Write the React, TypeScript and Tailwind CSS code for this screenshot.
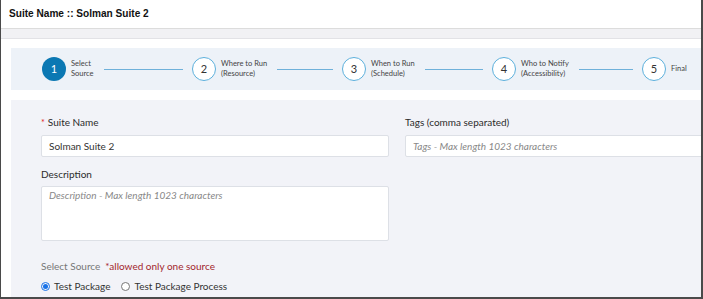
import React from 'react';

const steps = [
  { n: 1, label: ['Select', 'Source'] },
  { n: 2, label: ['Where to Run', '(Resource)'] },
  { n: 3, label: ['When to Run', '(Schedule)'] },
  { n: 4, label: ['Who to Notify', '(Accessibility)'] },
  { n: 5, label: ['Final'] },
];

const font = { fontFamily: 'Lato, "Noto Sans", sans-serif' };

export default function App() {
  return (
    <div
      className="w-[703px] h-[299px] overflow-hidden bg-white border-l border-r-2 border-b-2 border-[#4a4a4a] flex flex-col"
      style={font}
    >
      <div className="h-[29px] shrink-0 flex items-center pl-[8px] border-b border-[#dcdcdc]">
        <span className="text-[10.1px] font-bold text-[#111]" style={{ fontFamily: '"Liberation Sans", Arial, sans-serif' }}>
          Suite Name :: Solman Suite 2
        </span>
      </div>
      <div className="h-[10px] shrink-0 bg-[#f1f1f4] border-b border-[#e2e2e6]" />
      <div className="flex-1 pl-[10px] pt-[9px] flex flex-col min-h-0">
        <div className="h-[42px] shrink-0 bg-[#edf2f8] flex items-center pl-[31px]">
          {steps.map((s, i) => (
            <div key={s.n} className="w-[150px] shrink-0 flex items-center">
              <div
                className={
                  s.n === 1
                    ? 'w-[24px] h-[24px] rounded-full bg-[#0b78b3] text-white flex items-center justify-center text-[11px]'
                    : 'w-[24px] h-[24px] rounded-full bg-white border border-[#5cb0dc] text-[#333] flex items-center justify-center text-[11px]'
                }
              >
                {s.n}
              </div>
              <div className="ml-[5px] text-[7.5px] leading-[10px] text-[#444] whitespace-nowrap">
                {s.label.map((l) => (
                  <div key={l}>{l}</div>
                ))}
              </div>
              {i < steps.length - 1 && <div className="flex-1 h-px bg-[#6fb1da] ml-[10px] mr-[9px]" />}
            </div>
          ))}
        </div>
        <div className="flex-1 mt-[10px] bg-[#f2f3f8] pl-[30px] pt-[15px]">
          <div className="flex gap-[16px]">
            <div className="w-[348px] shrink-0">
              <div className="text-[10px] text-[#2b2b2b] h-[14px] leading-[14px]">
                <span className="text-[#e02020] text-[9px] mr-[3px]">*</span>Suite Name
              </div>
              <div className="mt-[6px] h-[22px] bg-white border border-[#dde0e6] rounded-[2px] flex items-center pl-[7px] text-[10px] text-[#333]">
                Solman Suite 2
              </div>
              <div className="mt-[10px] text-[10px] text-[#2b2b2b] h-[14px] leading-[14px]">Description</div>
              <div className="mt-[5px] h-[55px] bg-white border border-[#dde0e6] rounded-[2px] pl-[7px] pt-[1px] text-[10px] italic text-[#888]">
                Description - Max length 1023 characters
              </div>
            </div>
            <div className="w-[348px] shrink-0">
              <div className="text-[10px] text-[#2b2b2b] h-[14px] leading-[14px]">Tags (comma separated)</div>
              <div className="mt-[6px] h-[22px] bg-white border border-[#dde0e6] rounded-[2px] flex items-center pl-[7px] text-[10px] italic text-[#888]">
                Tags - Max length 1023 characters
              </div>
            </div>
          </div>
          <div className="mt-[18px] text-[10px] h-[14px] leading-[14px]">
            <span className="text-[#777]">Select Source</span>
            <span className="ml-[5px] text-[#a3262d]">*allowed only one source</span>
          </div>
          <div className="mt-[6px] flex items-center text-[10px] text-[#333] h-[14px]">
            <span className="w-[9px] h-[9px] rounded-full border border-[#1a73e8] flex items-center justify-center">
              <span className="w-[5px] h-[5px] rounded-full bg-[#1a73e8]" />
            </span>
            <span className="ml-[4px]">Test Package</span>
            <span className="ml-[11px] w-[9px] h-[9px] rounded-full border border-[#777] bg-white" />
            <span className="ml-[4px]">Test Package Process</span>
          </div>
        </div>
      </div>
    </div>
  );
}
